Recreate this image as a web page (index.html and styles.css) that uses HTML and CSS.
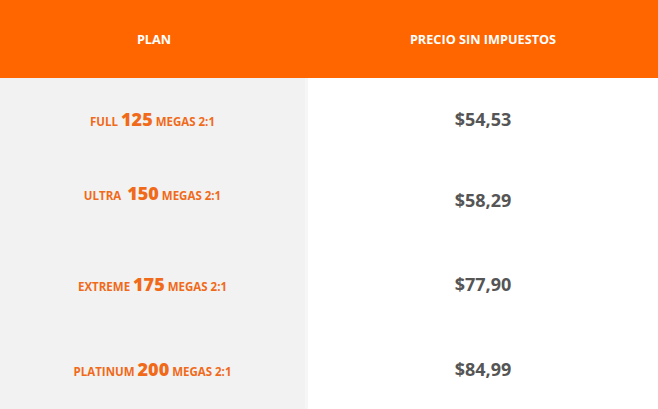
FILE: index.html
```html
<!DOCTYPE html>
<html lang="es">
<head>
<meta charset="utf-8">
<title>Planes</title>
<link rel="stylesheet" href="styles.css">
</head>
<body>
<div class="table">
  <div class="head plan-h">PLAN</div>
  <div class="head price-h">PRECIO SIN IMPUESTOS</div>

  <div class="plan r1"><span>FULL <b>125</b> MEGAS 2:1</span></div>
  <div class="price r1">$54,53</div>

  <div class="plan r2 up"><span>ULTRA&nbsp; <b>150</b> MEGAS 2:1</span></div>
  <div class="price r2">$58,29</div>

  <div class="plan r3"><span>EXTREME <b>175</b> MEGAS 2:1</span></div>
  <div class="price r3">$77,90</div>

  <div class="plan r4"><span>PLATINUM <b>200</b> MEGAS 2:1</span></div>
  <div class="price r4">$84,99</div>
</div>
</body>
</html>
```
FILE: styles.css
```css
html, body {
  margin: 0;
  padding: 0;
  background: #ffffff;
}
body {
  font-family: "Open Sans", "Liberation Sans", sans-serif;
  width: 658px;
  height: 409px;
  overflow: hidden;
}
.table {
  display: grid;
  grid-template-columns: 308px 350px;
  grid-template-rows: 78px 82px 80px 88px 81px;
}
.head {
  background: #ff6600;
  color: #ffffff;
  font-weight: 700;
  font-size: 12.7px;
  display: flex;
  align-items: center;
  justify-content: center;
}
.plan {
  background: #f2f2f2;
  border-right: 3px solid #f6f6f6;
  color: #f06a1a;
  font-weight: 700;
  font-size: 11.5px;
  display: flex;
  align-items: center;
  justify-content: center;
}
.plan b {
  font-size: 18px;
}
.plan.up {
  padding-bottom: 14px;
}
.price {
  color: #555555;
  font-weight: 700;
  font-size: 18px;
  display: flex;
  align-items: center;
  justify-content: center;
}
```
